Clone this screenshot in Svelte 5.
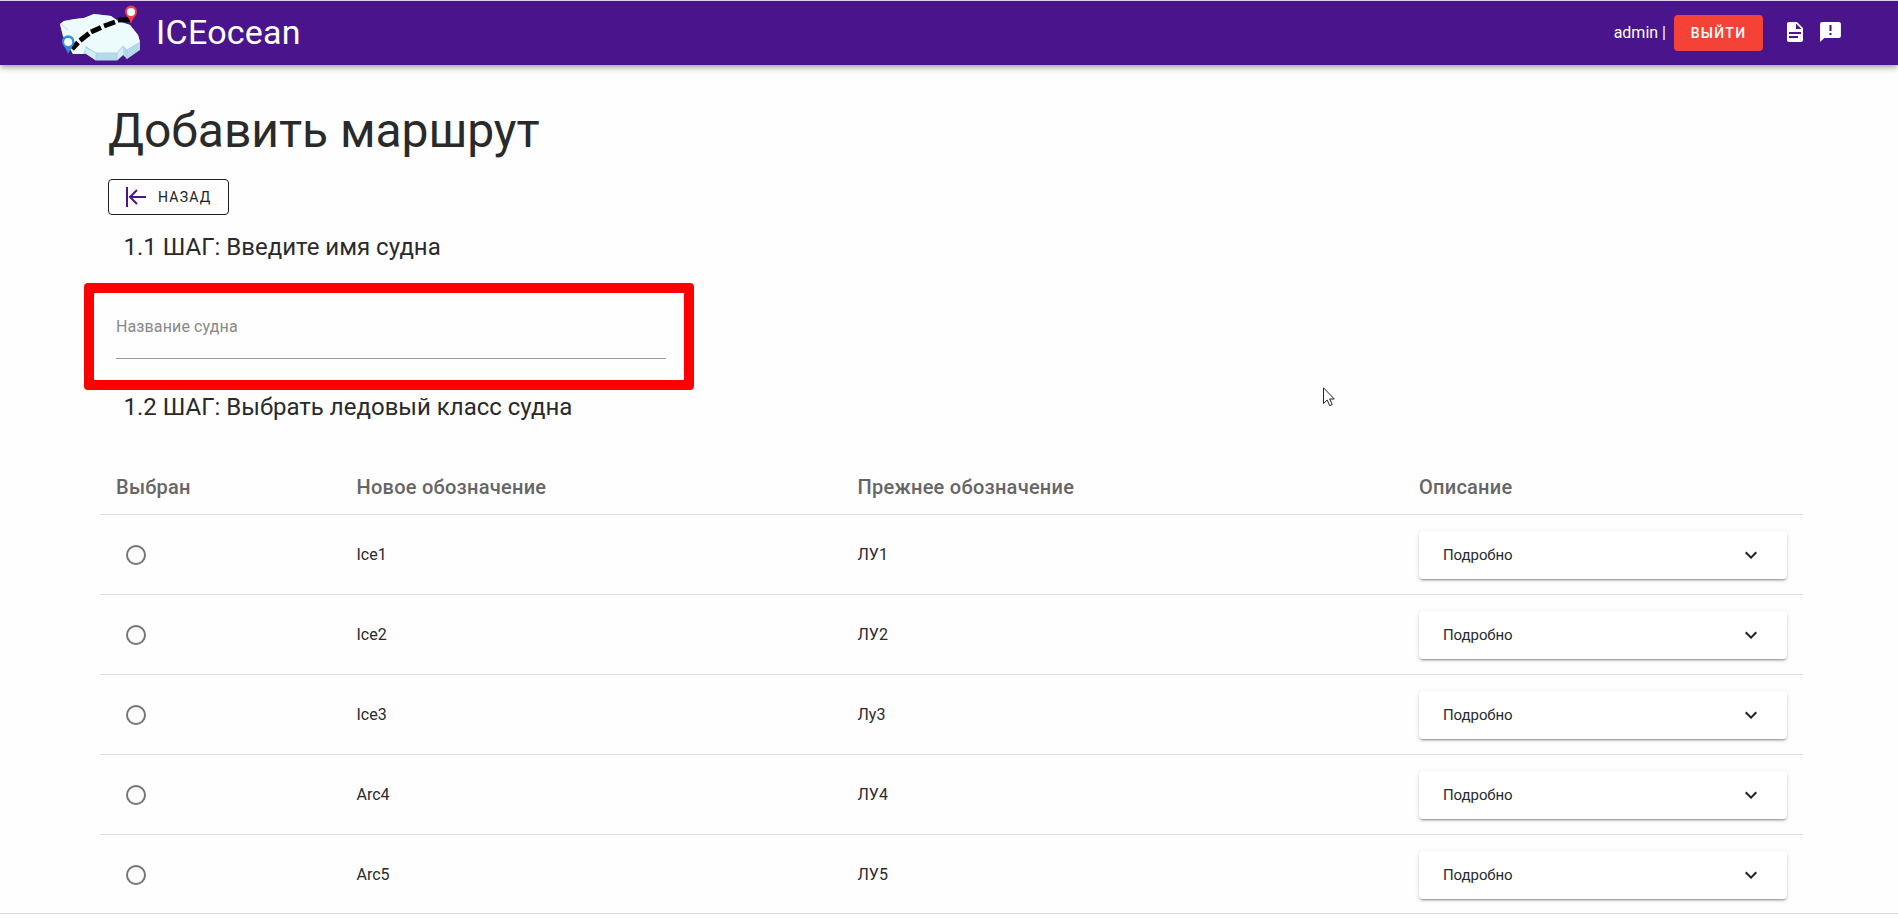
<script>
  const rows = [
    ['Ice1', 'ЛУ1'],
    ['Ice2', 'ЛУ2'],
    ['Ice3', 'Лу3'],
    ['Arc4', 'ЛУ4'],
    ['Arc5', 'ЛУ5']
  ];
</script>

<div class="page">
  <header>
    <svg class="logo" viewBox="0 0 82 57" width="82" height="57">
      <path d="M0 19 L4 16 15 14 24 13 34 9 51 11 58 16 70 20 78 30 80 37 80 45 67 54 63 50 57 55.500 36 55.500 27 49 13 49 3 31 Z" fill="#b5dbea" />
      <path d="M0 19 L4 16 15 14 24 13 34 9 51 11 58 16 70 20 78 30 80 37 67 45 63 41 57 48 36 48 26 41 23 49 13 49 3 31 Z" fill="#edfbfe" />
      <path d="M25 42 L36 48 V55.500 L26 49 Z M57 48 L63 41 V50 L57 55.500 Z" fill="#d3edf5" />
      <path d="M25 42 L36 48 H57 L63 41 L67 45 L80 37 M36 48 V55 M57 48 V55 M67 45 V54 M1 19 L8 25" fill="none" stroke="#9cc8dc" stroke-width=".7" />
      <path d="M12 44 L18 37.500 M20 35.500 L29 28.500 M31 27 L41 22.500 M44 21 L55 17 M58 15 L70 14.500" fill="none" stroke="#000" stroke-width="5" />
      <path d="M8 49 C7 43 2 41 2 36.5 a6.2 6.2 0 0 1 12.4 0 C14.400 41 10 44 8 49Z" fill="#3090df" />
      <circle cx="8.200" cy="37" r="4" fill="#fff" />
      <path d="M71 19 C70 13 65 11 65 6.500 a6 6 0 0 1 12 0 C77 11 72 14 71 19Z" fill="#ef3d49" />
      <circle cx="71" cy="7" r="4" fill="#fff" />
    </svg>
    <span class="brand">ICEocean</span>
    <span class="user">admin |</span>
    <button class="exit">Выйти</button>
    <svg class="doc" viewBox="0 0 24 24" width="24" height="24" fill="#fff"><path d="M13,9H18.5L13,3.5V9M6,2H14L20,8V20A2,2 0 0,1 18,22H6C4.890,22 4,21.100 4,20V4C4,2.890 4.890,2 6,2M15,18V16H6V18H15M18,14V12H6V14H18Z" /></svg>
    <svg class="msg" viewBox="0 0 24 24" width="25" height="24" fill="#fff" preserveAspectRatio="none"><path d="M13,11H11V5H13M13,15H11V13H13M20,2H4A2,2 0 0,0 2,4V22L6,18H20A2,2 0 0,0 22,16V4C22,2.890 21.100,2 20,2Z" /></svg>
  </header>

  <main>
    <h1>Добавить маршрут</h1>
    <button class="back">
      <svg viewBox="0 0 24 24" width="24" height="24" fill="none" stroke="#4a148c" stroke-width="2"><path d="M3 2V22M22 12H6M13 5L6 12L13 19" /></svg>
      <span>Назад</span>
    </button>
    <h2 class="first">1.1 ШАГ: Введите имя судна</h2>
    <div class="highlight">
      <div class="field">Название судна</div>
    </div>
    <h2 class="second">1.2 ШАГ: Выбрать ледовый класс судна</h2>

    <div class="table">
      <div class="row head">
        <div>Выбран</div>
        <div>Новое обозначение</div>
        <div>Прежнее обозначение</div>
        <div>Описание</div>
      </div>
      {#each rows as [fresh, old]}
        <div class="row">
          <div><span class="radio"></span></div>
          <div>{fresh}</div>
          <div>{old}</div>
          <div>
            <div class="panel">
              <span>Подробно</span>
              <svg viewBox="0 0 24 24" width="24" height="24" fill="#212121"><path d="M7.410,8.580L12,13.170L16.590,8.580L18,10L12,16L6,10L7.410,8.580Z" /></svg>
            </div>
          </div>
        </div>
      {/each}
    </div>
  </main>
  <footer></footer>

  <svg class="cursor" viewBox="0 0 12 20" width="12" height="20"><path d="M.5 .8V16.500L4.200 13L6.700 18.700L9.200 17.600L6.700 12H11.300Z" fill="#fff" stroke="#222" /></svg>
</div>

<style>
  :global(body) {
    margin: 0;
    background: #fefefe;
  }
  .page {
    position: relative;
    display: flex;
    flex-direction: column;
    box-sizing: border-box;
    height: 918px;
    overflow: hidden;
    font-family: Roboto, sans-serif;
    font-size: 16px;
    color: #2a2a2a;
  }
  header {
    display: flex;
    align-items: center;
    box-sizing: border-box;
    flex: none;
    height: 65px;
    padding: 0 55px 0 60px;
    border-top: 1px solid #dccfea;
    background: #4a148c;
    color: #fff;
    box-shadow: 0 2px 4px -1px rgba(0, 0, 0, 0.2), 0 4px 5px rgba(0, 0, 0, 0.14), 0 1px 10px rgba(0, 0, 0, 0.12);
  }
  .logo {
    flex: none;
    margin-right: 14px;
  }
  .brand {
    margin-bottom: 2px;
    font-size: 34px;
    line-height: 40px;
    letter-spacing: 0.25px;
  }
  .user {
    margin-left: auto;
    margin-right: 8px;
    margin-bottom: 1px;
  }
  button {
    box-sizing: border-box;
    flex: none;
    height: 36px;
    padding: 0;
    border-radius: 4px;
    font-family: inherit;
    font-size: 14px;
    font-weight: 500;
    letter-spacing: 1.25px;
    text-transform: uppercase;
  }
  .exit {
    width: 89px;
    border: 0;
    background: #f44336;
    color: #fff;
  }
  .doc {
    margin-left: 20px;
    margin-bottom: 2px;
  }
  .msg {
    margin-left: 11px;
    margin-bottom: 2px;
  }
  main {
    display: flex;
    flex: none;
    flex-direction: column;
    align-items: flex-start;
    height: 848px;
    padding-left: 84px;
  }
  h1 {
    flex: none;
    margin: 36px 0 0 24px;
    font-size: 48px;
    font-weight: 400;
    line-height: 60px;
    letter-spacing: -0.05px;
  }
  .back {
    display: flex;
    align-items: center;
    width: 121px;
    margin: 18px 0 0 24px;
    padding-left: 15px;
    border: 1px solid #212121;
    background: transparent;
    color: #212121;
    font-weight: 400;
  }
  .back span {
    margin-left: 10px;
  }
  h2 {
    flex: none;
    margin: 0 0 0 39.5px;
    font-size: 24px;
    font-weight: 400;
    line-height: 32px;
  }
  .first {
    margin-top: 16px;
  }
  .highlight {
    box-sizing: border-box;
    flex: none;
    width: 610px;
    height: 107px;
    margin-top: 20px;
    padding: 20px 18px 0 22px;
    border: 10px solid #f00;
    border-radius: 4px;
  }
  .field {
    height: 45px;
    border-bottom: 1px solid #999;
    color: #888;
    line-height: 28px;
    letter-spacing: 0.12px;
  }
  .second {
    margin-top: 1px;
  }
  .table {
    flex: none;
    width: 1703px;
    margin: 37px 0 0 16px;
  }
  .row {
    display: grid;
    grid-template-columns: 240.5px 501px 561.5px 400px;
    align-items: center;
    box-sizing: border-box;
    height: 80px;
    border-bottom: 1px solid #dedede;
  }
  .row > div {
    padding: 0 16px;
  }
  .row:last-child {
    border-bottom-color: transparent;
  }
  .head {
    height: 55px;
    color: #666;
    font-size: 20px;
    font-weight: 500;
    letter-spacing: 0.25px;
  }
  .radio {
    display: block;
    box-sizing: border-box;
    width: 20px;
    height: 20px;
    margin-left: 9.5px;
    border: 2px solid #757575;
    border-radius: 50%;
  }
  .panel {
    display: flex;
    align-items: center;
    justify-content: space-between;
    height: 48px;
    padding: 0 24.5px 0 24px;
    border-radius: 4px;
    background: #fff;
    font-size: 15px;
    letter-spacing: -0.08px;
    box-shadow: 0 3px 1px -2px rgba(0, 0, 0, 0.2), 0 2px 2px rgba(0, 0, 0, 0.14), 0 1px 5px rgba(0, 0, 0, 0.12);
  }
  footer {
    flex: none;
    height: 5px;
    border-top: 1px solid #d8d8d8;
  }
  .cursor {
    position: absolute;
    left: 1323px;
    top: 387px;
  }
</style>
